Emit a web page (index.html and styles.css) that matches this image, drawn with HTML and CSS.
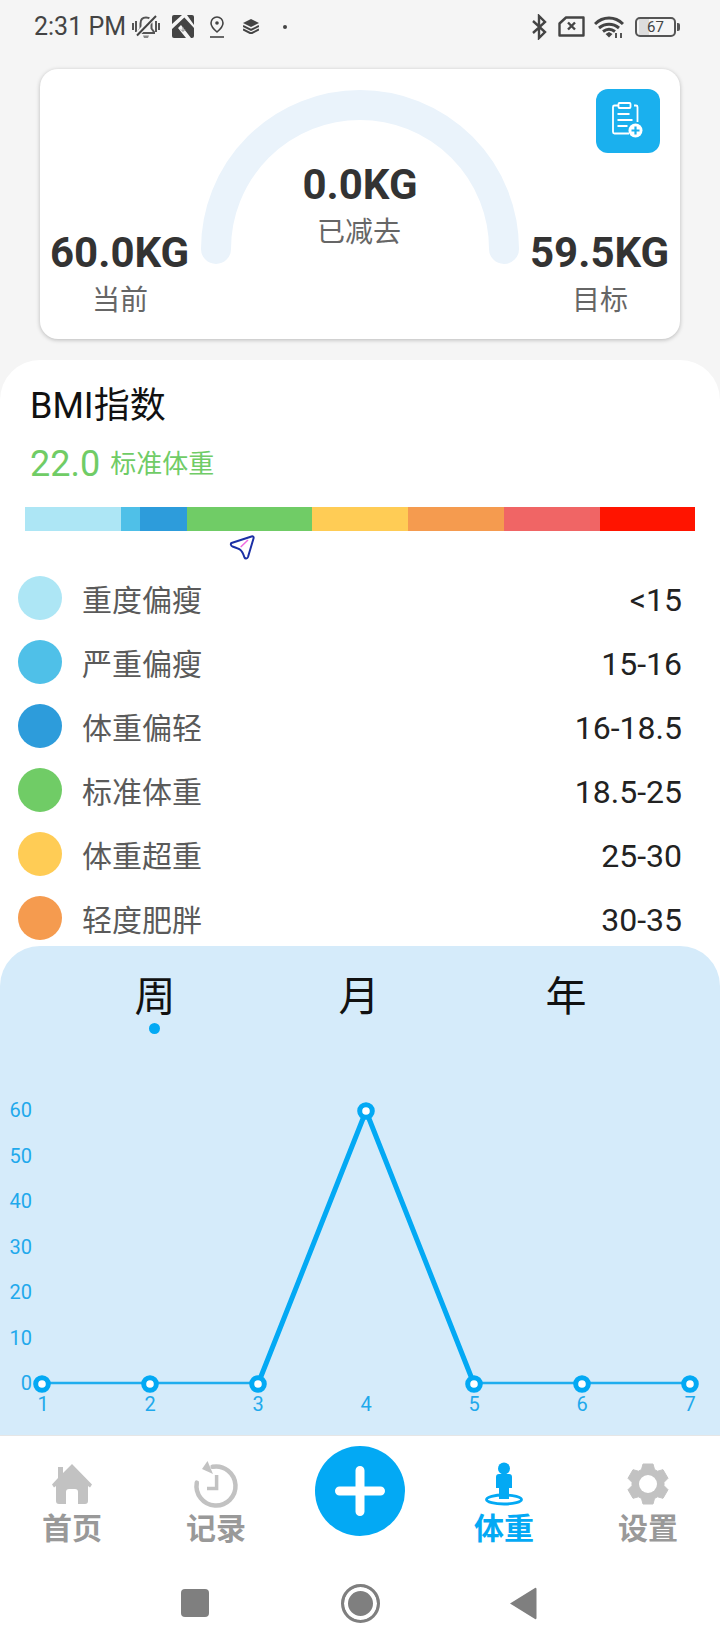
FILE: index.html
```html
<!DOCTYPE html>
<html lang="zh-CN">
<head>
    <meta charset="UTF-8">
    <meta name="viewport" content="width=device-width, initial-scale=1.0">
    <title>体重</title>
    <link rel="stylesheet" href="styles.css">
</head>
<body>
    <div class="status-bar">
        <span class="time">2:31 PM</span>
        <svg class="st-bell" viewBox="0 0 28 26"><path d="M14 3.500c-3.500 0-5.500 2.500-5.500 6v5l-2.500 3.500v1h16v-1l-2.500-3.500v-5c0-3.500-2-6-5.500-6z" fill="none" stroke="#555" stroke-width="2"/><path d="M11 21.500h6l-1 2.500h-4z" fill="#888"/><path d="M1 9v7M4 7v11M24 7v11M27 9v7" stroke="#555" stroke-width="2"/><path d="M4 22 24 1" stroke="#f5f5f5" stroke-width="5"/><path d="M5 21.500 24 2" stroke="#444" stroke-width="2"/></svg>
        <svg class="st-box" viewBox="0 0 22 23"><rect width="22" height="23" rx="2" fill="#444"/><path d="M0 9 10 0h5L0 14zM15 0 22 10v3L11 1zM6 13l3-3 10 13h-5z" fill="#f5f5f5"/><path d="M11 12v4M9 14.500l2 2 2-2" stroke="#888" stroke-width="1" fill="none"/></svg>
        <svg class="st-pin" viewBox="0 0 14 22"><path d="M7 1a6 6 0 0 1 6 6c0 4-6 9-6 9S1 11 1 7a6 6 0 0 1 6-6z" fill="none" stroke="#444" stroke-width="1.600"/><circle cx="7" cy="7" r="1.800" fill="#444"/><path d="M0 21h14" stroke="#444" stroke-width="1.600"/></svg>
        <svg class="st-layers" viewBox="0 0 16 15"><path d="M8 0l8 4-8 4-8-4z" fill="#444"/><path d="M0 7l8 4 8-4M0 10.500l8 4 8-4" fill="none" stroke="#444" stroke-width="2"/></svg>
        <span class="st-dot"></span>
        <svg class="st-bt" viewBox="0 0 17 26"><path d="M2 7l12 11-6 6V2l6 6L2 19" fill="none" stroke="#444" stroke-width="2.400"/></svg>
        <svg class="st-sim" viewBox="0 0 27 21"><path d="M8 1.500h17.500v18H1.500v-12z" fill="none" stroke="#444" stroke-width="2.400" stroke-linejoin="round"/><path d="M10 6.500l7 7M17 6.500l-7 7" stroke="#444" stroke-width="2.400"/></svg>
        <svg class="st-wifi" viewBox="0 0 30 22"><path d="M1 8c8-8 20-8 28 0M5 12c6-5 14-5 20 0M9 15.500c4-3 8-3 12 0" fill="none" stroke="#444" stroke-width="3"/><path d="M11.500 18l3.500-2 3.500 2-3.500 3.500z" fill="#444"/><path d="M22 17v5M27 17v5" stroke="#444" stroke-width="1.800"/></svg>
        <div class="st-battery"><span class="st-level">67</span></div>
    </div>

    <div class="card">
        <div class="stat">
            <div class="stat-num">60.0KG</div>
            <div class="stat-label">当前</div>
        </div>
        <div class="gauge">
            <svg class="gauge-arc" viewBox="0 0 318 174"><path d="M15 159a144 144 0 0 1 288 0" fill="none" stroke="#EAF3FB" stroke-width="30" stroke-linecap="round"/></svg>
            <div class="gauge-text">
                <div class="stat-num">0.0KG</div>
                <div class="stat-label">已减去</div>
            </div>
        </div>
        <div class="stat">
            <div class="stat-num">59.5KG</div>
            <div class="stat-label">目标</div>
        </div>
        <div class="add-record">
            <svg viewBox="0 0 32 38" width="32" height="38"><path d="M6 3.500H2.500a1.500 1.500 0 0 0-1.500 1.500v25a1.500 1.500 0 0 0 1.500 1.500H17M22 3.500h2a1.500 1.500 0 0 1 1.500 1.500v15" fill="none" stroke="#fff" stroke-width="1.800"/><rect x="6.500" y="1" width="12" height="5" rx="1" fill="none" stroke="#fff" stroke-width="1.800"/><path d="M5.500 12h12M5.500 18h15M5.500 24h10" stroke="#fff" stroke-width="1.800"/><circle cx="23.500" cy="28.500" r="7" fill="#fff"/><path d="M23.500 24.500v8M19.500 28.500h8" stroke="#1AB0EE" stroke-width="2.200"/></svg>
        </div>
    </div>

    <div class="sheet">
        <div class="bmi">
            <div class="bmi-title">BMI指数</div>
            <div class="bmi-value">
                <span class="bmi-num">22.0</span>
                <span class="bmi-state">标准体重</span>
            </div>
            <div class="bmi-bar">
                <span class="seg seg1"></span>
                <span class="seg seg2"></span>
                <span class="seg seg3"></span>
                <span class="seg seg4"></span>
                <span class="seg seg5"></span>
                <span class="seg seg6"></span>
                <span class="seg seg7"></span>
                <span class="seg seg8"></span>
            </div>
            <svg class="bmi-marker" viewBox="0 0 26 26"><path d="M2.500 8 22.500 1.500c1.500-.5 2.500.5 2 2L19 22c-.8 2-2.800 2-3.500.5-1-3-2-6-4-7.500-2-1.500-5-2.500-8-3.500C1.500 10.800 1.500 8.500 2.500 8z" fill="#fff" stroke="#1B2FA5" stroke-width="2"/><path d="M11.700 12 19 5" stroke="#F06BE0" stroke-width="1.500"/></svg>
            <div class="row"><span class="dot seg1"></span><span class="row-name">重度偏瘦</span><span class="row-range">&lt;15</span></div>
            <div class="row"><span class="dot seg2"></span><span class="row-name">严重偏瘦</span><span class="row-range">15-16</span></div>
            <div class="row"><span class="dot seg3"></span><span class="row-name">体重偏轻</span><span class="row-range">16-18.5</span></div>
            <div class="row"><span class="dot seg4"></span><span class="row-name">标准体重</span><span class="row-range">18.5-25</span></div>
            <div class="row"><span class="dot seg5"></span><span class="row-name">体重超重</span><span class="row-range">25-30</span></div>
            <div class="row"><span class="dot seg6"></span><span class="row-name">轻度肥胖</span><span class="row-range">30-35</span></div>
        </div>

        <div class="chart-panel">
            <div class="tabs">
                <div class="tab active">周</div>
                <div class="tab">月</div>
                <div class="tab">年</div>
            </div>
            <svg class="chart" viewBox="0 0 720 489" width="720" height="489">
                <g class="y-labels">
                    <text x="32" y="171">60</text>
                    <text x="32" y="217">50</text>
                    <text x="32" y="262">40</text>
                    <text x="32" y="308">30</text>
                    <text x="32" y="353">20</text>
                    <text x="32" y="399">10</text>
                    <text x="32" y="444">0</text>
                </g>
                <path d="M42 437H258M474 437H690" fill="none" stroke="#1FADEE" stroke-width="2.600"/>
                <path d="M258 438 366 165 474 438" fill="none" stroke="#03A9F4" stroke-width="5" stroke-linejoin="round"/>
                <g class="points">
                    <circle cx="42" cy="438" r="6.300"/>
                    <circle cx="150" cy="438" r="6.300"/>
                    <circle cx="258" cy="438" r="6.300"/>
                    <circle cx="366" cy="165" r="6.300"/>
                    <circle cx="474" cy="438" r="6.300"/>
                    <circle cx="582" cy="438" r="6.300"/>
                    <circle cx="690" cy="438" r="6.300"/>
                </g>
                <g class="x-labels">
                    <text x="43" y="465">1</text>
                    <text x="150" y="465">2</text>
                    <text x="258" y="465">3</text>
                    <text x="366" y="465">4</text>
                    <text x="474" y="465">5</text>
                    <text x="582" y="465">6</text>
                    <text x="690" y="465">7</text>
                </g>
            </svg>
        </div>
    </div>

    <div class="nav">
        <div class="nav-item">
            <svg viewBox="-2 0 46 46"><path d="M21 1 41 21.500 39 24.500 37 23V38a3 3 0 0 1-3 3H27V29a3 3 0 0 0-3-3H18a3 3 0 0 0-3 3V41H8a3 3 0 0 1-3-3V23L3 24.500 1 21.500 7 15V4h5v6z" fill="#C2C2C2"/></svg>
            <span class="nav-label">首页</span>
        </div>
        <div class="nav-item">
            <svg viewBox="0 0 46 46"><path d="M19.600 3.800A19.500 19.500 0 1 1 3.800 19.600" fill="none" stroke="#C2C2C2" stroke-width="4.500" stroke-linecap="round"/><path d="M14.500-2 9 6 20 11z" fill="#C2C2C2"/><path d="M23.600 12V25.500H14" fill="none" stroke="#C2C2C2" stroke-width="3.500"/></svg>
            <span class="nav-label">记录</span>
        </div>
        <div class="nav-add">
            <svg viewBox="0 0 90 90" width="90" height="90"><path d="M45 24.500v41M24.500 45h41" stroke="#fff" stroke-width="9" stroke-linecap="round"/></svg>
        </div>
        <div class="nav-item selected">
            <svg viewBox="-2 0 46 46"><ellipse cx="21" cy="36.500" rx="17.500" ry="4.500" fill="none" stroke="#03A9F4" stroke-width="2.800"/><circle cx="21" cy="5.500" r="6" fill="#03A9F4"/><path d="M13 14a3 3 0 0 1 3-3h10a3 3 0 0 1 3 3v11h-3v11H16V25h-3z" fill="#03A9F4"/></svg>
            <span class="nav-label">体重</span>
        </div>
        <div class="nav-item">
            <svg viewBox="-2 0 46 46"><path d="M16 1h10l1.500 5.500 3 1.700 5.500-1.500 5 8.600-4 4v3.400l4 4-5 8.600-5.500-1.500-3 1.700L26 41H16l-1.500-5.500-3-1.700L6 35.300l-5-8.600 4-4v-3.400l-4-4 5-8.600 5.500 1.500 3-1.700z" fill="#C2C2C2" stroke="#C2C2C2" stroke-linejoin="round" stroke-width="1"/><circle cx="21" cy="21" r="9" fill="#fff"/></svg>
            <span class="nav-label">设置</span>
        </div>
    </div>

    <div class="sys-bar">
        <span class="sys-square"></span>
        <span class="sys-home"></span>
        <svg class="sys-back" viewBox="0 0 27 33" width="27" height="33"><path d="M0 16.500 25 1a1 1 0 0 1 1.500 1v29a1 1 0 0 1-1.500 1z" fill="#7F7F7F"/></svg>
    </div>
</body>
</html>
```

FILE: styles.css
```css
* {
    box-sizing: border-box;
}
body {
    width: 720px;
    height: 1650px;
    margin: 0;
    overflow: hidden;
    background-color: #f5f5f5;
    font-family: Roboto, "Noto Sans CJK SC", sans-serif;
}

/* status bar */
.status-bar {
    height: 69px;
    padding: 0 44px 16px 34px;
    display: flex;
    align-items: center;
}
.time {
    font-size: 25px;
    color: #444;
}
.st-bell { width: 28px; height: 26px; margin-left: 6px; }
.st-box { width: 22px; height: 23px; margin-left: 12px; }
.st-pin { width: 14px; height: 22px; margin-left: 16px; }
.st-layers { width: 16px; height: 15px; margin-left: 19px; }
.st-dot {
    width: 4px;
    height: 4px;
    margin-left: 24px;
    border-radius: 50%;
    background-color: #444;
}
.st-bt { width: 17px; height: 26px; margin-left: auto; }
.st-sim { width: 27px; height: 21px; margin-left: 10px; }
.st-wifi { width: 30px; height: 22px; margin-left: 9px; }
.st-battery {
    position: relative;
    width: 41px;
    height: 20px;
    margin-left: 11px;
    border: 2px solid #555;
    border-radius: 5px;
    background: linear-gradient(90deg, transparent 2px, #ddd 2px, #ddd 12px, transparent 12px);
    font-size: 15px;
    line-height: 16px;
    text-align: center;
    color: #444;
}
.st-battery::after {
    content: "";
    position: absolute;
    top: 4px;
    right: -6px;
    width: 3px;
    height: 8px;
    border-radius: 0 2px 2px 0;
    background-color: #555;
}

/* weight card */
.card {
    position: relative;
    width: 640px;
    height: 270px;
    margin: 0 auto 21px;
    padding: 21px 10px 18px;
    display: flex;
    align-items: flex-end;
    background-color: white;
    border-radius: 18px;
    box-shadow: 0 1px 4px rgba(0, 0, 0, 0.25);
}
.stat {
    width: 138px;
    text-align: center;
}
.stat-num {
    font-size: 42px;
    line-height: 50px;
    font-weight: bold;
    color: #333;
    white-space: nowrap;
}
.stat-label {
    margin-top: 3px;
    font-size: 28px;
    line-height: 40px;
    color: #666;
}
.stat > .stat-label {
    padding-left: 2px;
}
.gauge {
    position: relative;
    align-self: flex-start;
    width: 318px;
    height: 174px;
    margin: 0 11px 0 13px;
}
.gauge-arc {
    display: block;
    width: 318px;
    height: 174px;
}
.gauge-text {
    position: absolute;
    top: 70px;
    left: 0;
    width: 100%;
    text-align: center;
}
.gauge-text .stat-label {
    padding-right: 2px;
}
.add-record {
    position: absolute;
    top: 20px;
    right: 20px;
    width: 64px;
    height: 64px;
    display: flex;
    align-items: center;
    justify-content: center;
    background-color: #1AB0EE;
    border-radius: 12px;
}

/* bmi section */
.sheet {
    background-color: white;
    border-radius: 40px 40px 0 0;
}
.bmi {
    position: relative;
    height: 586px;
    padding-top: 23px;
    overflow: hidden;
}
.bmi-title {
    margin-left: 30px;
    font-size: 36px;
    line-height: 46px;
    color: #111;
}
.bmi-value {
    margin: 10px 0 0 30px;
    height: 50px;
    display: flex;
    align-items: center;
    color: #70CC66;
}
.bmi-num {
    font-size: 36px;
}
.bmi-state {
    margin: -6px 0 0 10px;
    font-size: 26px;
}
.bmi-bar {
    width: 670px;
    height: 24px;
    margin: 18px 0 0 25px;
    display: flex;
}
.seg { display: block; height: 100%; }
.bmi-bar .seg1 { width: 96px; }
.bmi-bar .seg2 { width: 19px; }
.bmi-bar .seg3 { width: 47px; }
.bmi-bar .seg4 { width: 125px; }
.bmi-bar .seg5 { width: 96px; }
.bmi-bar .seg6 { width: 96px; }
.bmi-bar .seg7 { width: 96px; }
.bmi-bar .seg8 { width: 95px; }
.seg1 { background-color: #ADE6F5; }
.seg2 { background-color: #4FC0E8; }
.seg3 { background-color: #2D9CDB; }
.seg4 { background-color: #70CC66; }
.seg5 { background-color: #FFCC55; }
.seg6 { background-color: #F59B4F; }
.seg7 { background-color: #F06565; }
.seg8 { background-color: #FF1400; }
.bmi-marker {
    display: block;
    width: 26px;
    height: 26px;
    margin: 4px 0 5px 229px;
}
.row {
    height: 64px;
    padding: 0 38px 0 18px;
    display: flex;
    align-items: center;
}
.dot {
    width: 44px;
    height: 44px;
    border-radius: 50%;
}
.row-name {
    margin-left: 20px;
    font-size: 30px;
    color: #5a5a5a;
}
.row-range {
    margin-left: auto;
    padding-top: 3px;
    font-size: 32px;
    color: #222;
}

/* chart */
.chart-panel {
    position: relative;
    height: 489px;
    background-color: #D5EBFA;
    border-radius: 40px 40px 0 0;
}
.tabs {
    position: absolute;
    top: 22px;
    left: 0;
    display: flex;
}
.tab {
    position: relative;
    width: 44px;
    font-size: 41px;
    line-height: 58px;
    color: #111;
    text-align: center;
}
.tab:nth-child(1) { margin-left: 133px; }
.tab:nth-child(2) { margin-left: 160px; }
.tab:nth-child(3) { margin-left: 163px; }
.tab.active::after {
    content: "";
    position: absolute;
    top: 55px;
    left: 16px;
    width: 11px;
    height: 11px;
    border-radius: 50%;
    background-color: #03A9F4;
}
.chart {
    display: block;
}
.y-labels text {
    font-size: 20px;
    fill: #1FA9EC;
    text-anchor: end;
}
.x-labels text {
    font-size: 20px;
    fill: #1FA9EC;
    text-anchor: middle;
}
.points circle {
    fill: white;
    stroke: #03A9F4;
    stroke-width: 5;
}

/* bottom nav */
.nav {
    position: relative;
    height: 127px;
    padding-top: 16px;
    display: flex;
    background-color: white;
    border-top: 1px solid #e6e6e6;
}
.nav-item {
    width: 144px;
    padding-top: 11px;
    display: flex;
    flex-direction: column;
    align-items: center;
    color: #999;
}
.nav-item svg {
    display: block;
    width: 46px;
    height: 46px;
    overflow: visible;
}
.nav-item.selected {
    color: #03A9F4;
}
.nav-label {
    margin-top: 2px;
    font-size: 30px;
    line-height: 36px;
    font-weight: bold;
}
.nav-add {
    width: 144px;
    height: 90px;
    margin-top: -6px;
    display: flex;
    justify-content: center;
}
.nav-add svg {
    background-color: #03A9F4;
    border-radius: 50%;
}

/* system buttons */
.sys-bar {
    height: 88px;
    padding-bottom: 6px;
    display: flex;
    align-items: center;
    background-color: white;
}
.sys-square {
    width: 28px;
    height: 28px;
    margin-left: 181px;
    border-radius: 4px;
    background-color: #7F7F7F;
}
.sys-home {
    width: 39px;
    height: 39px;
    margin-left: 132px;
    border: 3px solid #7F7F7F;
    border-radius: 50%;
    background-color: #7F7F7F;
    box-shadow: inset 0 0 0 4px white;
}
.sys-back {
    margin-left: 130px;
}
```
